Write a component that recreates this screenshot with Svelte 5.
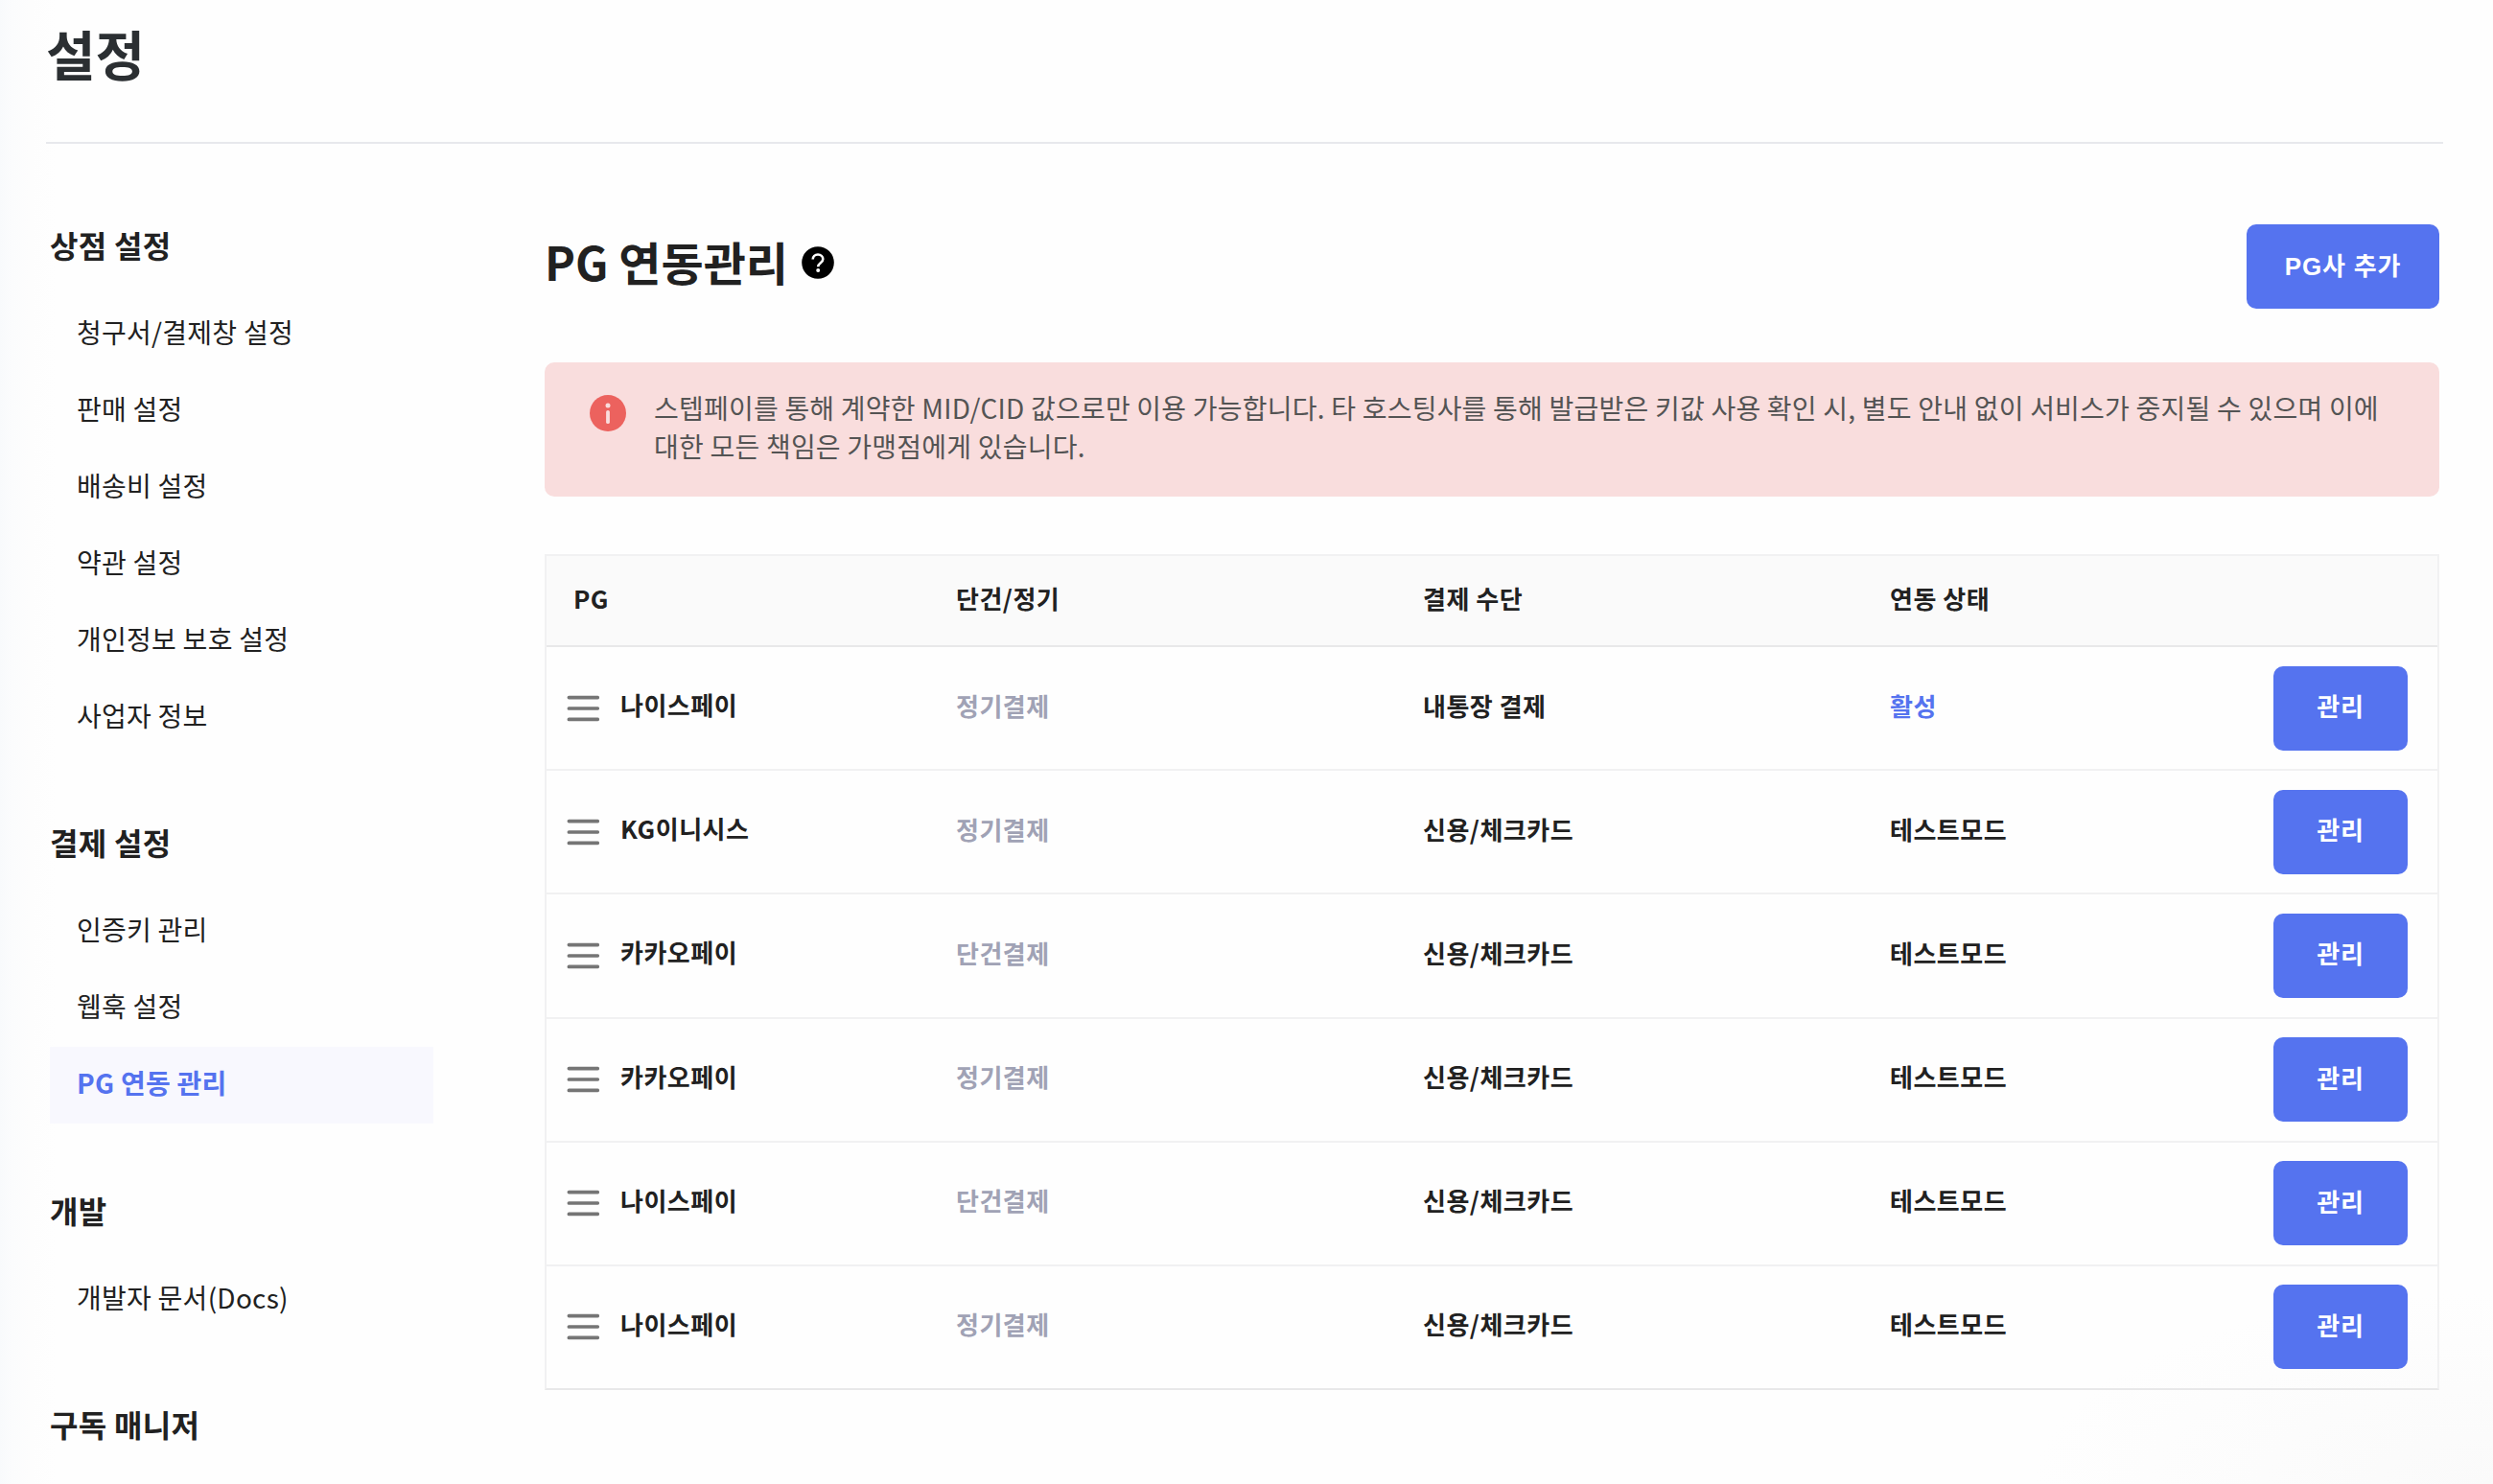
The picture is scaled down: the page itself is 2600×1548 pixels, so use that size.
<script>
  const groups = [
    { title: '상점 설정', items: ['청구서/결제창 설정', '판매 설정', '배송비 설정', '약관 설정', '개인정보 보호 설정', '사업자 정보'] },
    { title: '결제 설정', items: ['인증키 관리', '웹훅 설정', 'PG 연동 관리'] },
    { title: '개발', items: ['개발자 문서(Docs)'] },
    { title: '구독 매니저', items: [] },
  ];
  const active = 'PG 연동 관리';
  const rows = [
    { name: '나이스페이', kind: '정기결제', method: '내통장 결제', status: '활성', on: true },
    { name: 'KG이니시스', kind: '정기결제', method: '신용/체크카드', status: '테스트모드' },
    { name: '카카오페이', kind: '단건결제', method: '신용/체크카드', status: '테스트모드' },
    { name: '카카오페이', kind: '정기결제', method: '신용/체크카드', status: '테스트모드' },
    { name: '나이스페이', kind: '단건결제', method: '신용/체크카드', status: '테스트모드' },
    { name: '나이스페이', kind: '정기결제', method: '신용/체크카드', status: '테스트모드' },
  ];
</script>

<div class="page">
  <header><h1>설정</h1></header>
  <div class="body">
    <nav>
      {#each groups as g}
        <section>
          <h3>{g.title}</h3>
          {#each g.items as item}
            <a class:active={item === active}>{item}</a>
          {/each}
        </section>
      {/each}
    </nav>
    <main>
      <div class="head">
        <h2>PG 연동관리</h2>
        <svg class="help" viewBox="0 0 34 34">
          <circle cx="17" cy="17" r="16.8" fill="#000" />
          <path d="M11.7 13.6c0-3 2.3-5.1 5.3-5.1s5.3 2.1 5.3 4.8c0 3.9-5.1 4-5.1 8" fill="none" stroke="#fff" stroke-width="2.6" />
          <circle cx="17.2" cy="24.9" r="2" fill="#fff" />
        </svg>
        <button class="add">PG사 추가</button>
      </div>
      <div class="alert">
        <svg viewBox="0 0 38 38">
          <circle cx="19" cy="19" r="19" fill="#ec625e" />
          <circle cx="19" cy="11" r="2.5" fill="#f9dddd" />
          <path d="M19 17.8v10.4" stroke="#f9dddd" stroke-width="3.8" stroke-linecap="round" />
        </svg>
        <p>스텝페이를 통해 계약한 MID/CID 값으로만 이용 가능합니다. 타 호스팅사를 통해 발급받은 키값 사용 확인 시, 별도 안내 없이 서비스가 중지될 수 있으며 이에<br />대한 모든 책임은 가맹점에게 있습니다.</p>
      </div>
      <div class="table">
        <div class="row thead">
          <span class="pg">PG</span><span>단건/정기</span><span>결제 수단</span><span>연동 상태</span>
        </div>
        <div class="tbody">
          {#each rows as r}
            <div class="row">
              <div class="name">
                <svg viewBox="0 0 34 28">
                  <path d="M2.4 2.6h29.8M2.4 14h29.8M2.4 25.4h29.8" stroke="#757575" stroke-width="3.7" stroke-linecap="round" />
                </svg>
                <span>{r.name}</span>
              </div>
              <span class="kind">{r.kind}</span>
              <span>{r.method}</span>
              <span class:on={r.on}>{r.status}</span>
              <button>관리</button>
            </div>
          {/each}
        </div>
      </div>
    </main>
  </div>
</div>

<style>
  :global(body) {
    margin: 0;
    background: #fefefe;
  }
  .page {
    box-sizing: border-box;
    width: 2600px;
    height: 1548px;
    overflow: hidden;
    padding: 0 52px 0 48px;
    font-family: 'Noto Sans CJK KR', sans-serif;
    color: #212121;
    background:
      linear-gradient(90deg, #f8fafc 0, #fbfcfd 12px, #fdfdfd 32px, rgba(254, 254, 254, 0) 60px),
      radial-gradient(ellipse 480px 200px at 2600px 1548px, #fafafa, rgba(254, 254, 254, 0));
  }
  h1, h2, h3, p { margin: 0; }
  header {
    box-sizing: border-box;
    height: 150px;
    border-bottom: 2px solid #e7e8ec;
  }
  h1 {
    font-size: 56px;
    line-height: 80px;
    padding-top: 15px;
    letter-spacing: 0;
    color: #2b2f32;
  }
  .body {
    display: flex;
    gap: 116px;
    padding-left: 4px;
  }
  nav {
    width: 400px;
    flex: none;
    padding-top: 84px;
  }
  section { margin-bottom: 68.4px; }
  h3 {
    font-size: 32px;
    line-height: 43px;
    letter-spacing: 0.3px;
    margin-bottom: 32px;
  }
  nav a {
    display: block;
    box-sizing: border-box;
    height: 80px;
    line-height: 74px;
    padding-left: 28px;
    font-size: 28px;
    letter-spacing: 0.26px;
  }
  nav a.active {
    background: #f8f8fe;
    color: #5573ef;
    font-weight: 700;
  }
  main {
    width: 1976px;
    padding-top: 84px;
  }
  .head {
    display: flex;
    height: 88px;
  }
  h2 {
    font-size: 48px;
    line-height: 76px;
    letter-spacing: 0;
  }
  .help {
    width: 34px;
    height: 34px;
    margin: 23px 0 0 14px;
  }
  button {
    box-sizing: border-box;
    width: 140px;
    height: 88px;
    padding: 0 0 6px;
    border: 0;
    border-radius: 10px;
    background: #5573ef;
    color: #fff;
    font: 700 26px 'Liberation Sans', 'Noto Sans CJK KR', sans-serif;
    letter-spacing: 0.8px;
  }
  .add {
    width: 201px;
    margin-left: auto;
  }
  .alert {
    box-sizing: border-box;
    display: flex;
    height: 140px;
    margin-top: 56px;
    padding: 27px 0 0 46.5px;
    border-radius: 10px;
    background: #f9dddd;
  }
  .alert svg {
    width: 38px;
    height: 38px;
    margin: 6.5px 29.5px 0 0;
    flex: none;
  }
  .alert p {
    font-size: 28px;
    line-height: 40px;
    letter-spacing: 0.22px;
    color: #545454;
    white-space: nowrap;
  }
  .table {
    box-sizing: border-box;
    height: 872px;
    margin-top: 60px;
    border: 2px solid #f1f1f2;
    border-bottom-color: #e8e8e9;
    display: flex;
    flex-direction: column;
  }
  .row {
    box-sizing: border-box;
    display: grid;
    grid-template-columns: 427px 487px 487px 400px 140px;
    align-items: center;
    border-bottom: 2px solid #f1f1f2;
    font-size: 26px;
    line-height: 40px;
    font-weight: 700;
    letter-spacing: 0.5px;
  }
  .row span { padding-bottom: 6px; }
  .thead {
    height: 95px;
    background: #fafafa;
    border-bottom-color: #e8e8e9;
  }
  .row .pg { padding-left: 28px; }
  .tbody {
    flex: 1;
    display: flex;
    flex-direction: column;
  }
  .tbody .row { flex: 1; }
  .tbody .row:last-child { border-bottom: 0; }
  .name {
    display: flex;
    align-items: center;
    gap: 22px;
    padding-left: 21px;
  }
  .row .name span { padding-bottom: 7px; }
  .name svg {
    width: 34px;
    height: 28px;
  }
  .row .kind { color: #a0a2b5; }
  .row .on { color: #5573ef; }
</style>
